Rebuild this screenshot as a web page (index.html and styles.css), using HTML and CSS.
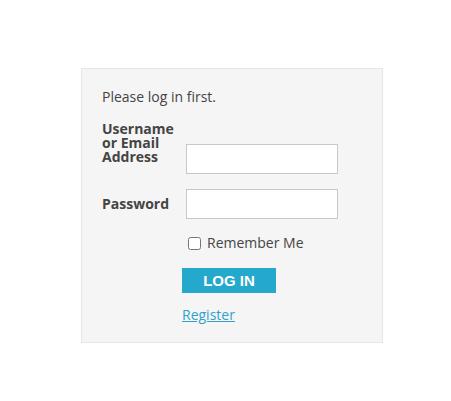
FILE: index.html
```html
<!DOCTYPE html>
<html>
<head>
<meta charset="utf-8">
<link rel="stylesheet" href="styles.css">
</head>
<body>
<div class="page">
  <form class="login">
    <p class="notice">Please log in first.</p>
    <div class="row row-top">
      <label class="label" for="user">Username or Email Address</label>
      <input class="field field-user" id="user" type="text">
    </div>
    <div class="row row-mid">
      <label class="label" for="pass">Password</label>
      <input class="field" id="pass" type="password">
    </div>
    <div class="row row-indent">
      <label class="remember"><input class="check" type="checkbox"><span>Remember Me</span></label>
    </div>
    <div class="row row-indent">
      <button class="btn" type="button">LOG IN</button>
    </div>
    <div class="row row-indent">
      <a class="register" href="#">Register</a>
    </div>
  </form>
</div>
</body>
</html>
```

FILE: styles.css
```css
html, body {
  margin: 0;
  padding: 0;
  background: #ffffff;
}
.page {
  padding: 68px 0 0 81px;
}
.login {
  box-sizing: border-box;
  width: 302px;
  height: 275px;
  background: #f5f5f5;
  border: 1px solid #e6e6e6;
  padding: 18px 20px 0 20px;
  font-family: "Open Sans", "DejaVu Sans", sans-serif;
  font-size: 14px;
  color: #444444;
  display: flex;
  flex-direction: column;
}
.notice {
  margin: 0;
  line-height: 20px;
}
.row {
  display: flex;
}
.row-top {
  margin-top: 15px;
  align-items: flex-start;
}
.row-mid {
  margin-top: 15px;
  align-items: center;
}
.row-indent {
  padding-left: 80px;
}
.label {
  width: 80px;
  flex: none;
  font-weight: 700;
  line-height: 14px;
}
.field {
  box-sizing: border-box;
  width: 152px;
  height: 30px;
  margin: 0 0 0 4px;
  border: 1px solid #c8c8c8;
  background: #ffffff;
  padding: 3px 5px;
}
.field-user {
  margin-top: 22px;
}
.remember {
  margin-top: 14px;
  display: flex;
  align-items: center;
  line-height: 20px;
}
.check {
  width: 13px;
  height: 13px;
  margin: 0 6px 0 6px;
}
.btn {
  margin-top: 15px;
  width: 94px;
  height: 25px;
  border: 0;
  padding: 0;
  background: #24a8cb;
  color: #ffffff;
  font-family: "Liberation Sans", Arial, sans-serif;
  font-weight: 700;
  font-size: 15px;
  line-height: 24px;
}
.register {
  margin-top: 12px;
  line-height: 20px;
  color: #2ea2cc;
  text-decoration: underline;
}
```
